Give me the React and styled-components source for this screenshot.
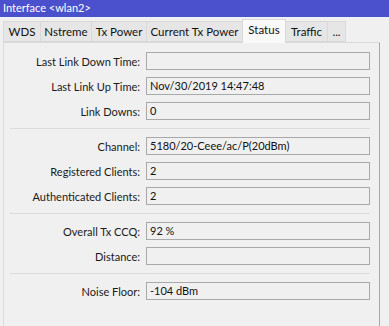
import { Fragment } from "react";
import styled, { createGlobalStyle } from "styled-components";

const GlobalStyle = createGlobalStyle`
  html, body {
    margin: 0;
    padding: 0;
    background: #f0f0f0;
    font-family: Lato, "Liberation Sans", Arial, sans-serif;
    font-size: 11px;
    color: #000;
  }
`;

const Window = styled.div`
  width: 389px;
  height: 326px;
  overflow: hidden;
  background: #f0f0f0;
`;

const TitleBar = styled.div`
  height: 17px;
  line-height: 16px;
  padding-left: 3px;
  background: #4b50cc;
  color: #fff;
  font-size: 11px;
`;

const TabStrip = styled.div`
  display: flex;
  align-items: flex-end;
  height: 25px;
  padding-left: 3px;
  position: relative;
  z-index: 1;
`;

const Tab = styled.div`
  box-sizing: border-box;
  width: ${({ $w }) => $w}px;
  height: ${({ $active }) => ($active ? 24 : 21)}px;
  margin-left: -1px;
  margin-bottom: ${({ $active }) => ($active ? -1 : 0)}px;
  border: 1px solid #d9d9d9;
  border-bottom: ${({ $active }) => ($active ? "none" : "1px solid #d9d9d9")};
  background: ${({ $active }) => ($active ? "#f9f9f9" : "#e6e6e6")};
  text-align: center;
  line-height: 19px;
  font-size: 11.5px;
  color: #111;
  white-space: nowrap;
  &:first-child {
    margin-left: 0;
  }
`;

const Panel = styled.div`
  margin: 0 9px 0 3px;
  border-top: 1px solid #d9d9d9;
  border-left: 1px solid #dadada;
  border-right: 1px solid #a8a8a8;
  background: #f0f0f0;
  padding: 9px 9px 0 0;
  height: 300px;
  box-sizing: border-box;
  display: flex;
  flex-direction: column;
  gap: 7px;
`;

const Row = styled.div`
  display: grid;
  grid-template-columns: 1fr 224px;
  column-gap: 6px;
  align-items: center;
  height: 18px;
`;

const Label = styled.div`
  text-align: right;
  white-space: nowrap;
  color: #1a1a1a;
`;

const Field = styled.div`
  box-sizing: border-box;
  height: 18px;
  line-height: 16px;
  padding-left: 3px;
  border: 1px solid #a9a9a9;
  background: #f0f0f0;
  color: #111;
  white-space: nowrap;
  overflow: hidden;
`;

const Separator = styled.div`
  height: 1px;
  margin: 1px 0 1px 6px;
  background: #dcdcdc;
`;

const tabs = [
  { name: "WDS", w: 38 },
  { name: "Nstreme", w: 52 },
  { name: "Tx Power", w: 56 },
  { name: "Current Tx Power", w: 97 },
  { name: "Status", w: 44, active: true },
  { name: "Traffic", w: 43 },
  { name: "...", w: 19 },
];

const groups = [
  [
    ["Last Link Down Time:", ""],
    ["Last Link Up Time:", "Nov/30/2019 14:47:48"],
    ["Link Downs:", "0"],
  ],
  [
    ["Channel:", "5180/20-Ceee/ac/P(20dBm)"],
    ["Registered Clients:", "2"],
    ["Authenticated Clients:", "2"],
  ],
  [
    ["Overall Tx CCQ:", "92 %"],
    ["Distance:", ""],
  ],
  [["Noise Floor:", "-104 dBm"]],
];

export default function App() {
  return (
    <Window>
      <GlobalStyle />
      <TitleBar>Interface &lt;wlan2&gt;</TitleBar>
      <TabStrip>
        {tabs.map((t) => (
          <Tab key={t.name} $w={t.w} $active={t.active}>
            {t.name}
          </Tab>
        ))}
      </TabStrip>
      <Panel>
        {groups.map((g, gi) => (
          <Fragment key={gi}>
            {gi > 0 && <Separator />}
            {g.map(([label, value]) => (
              <Row key={label}>
                <Label>{label}</Label>
                <Field>{value}</Field>
              </Row>
            ))}
          </Fragment>
        ))}
      </Panel>
    </Window>
  );
}
